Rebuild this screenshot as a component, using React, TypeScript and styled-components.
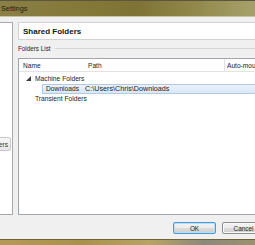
import React from "react";
import styled, { createGlobalStyle } from "styled-components";

const GlobalStyle = createGlobalStyle`
  html, body {
    margin: 0;
    padding: 0;
    width: 255px;
    height: 245px;
    overflow: hidden;
    background: #f0f0f0;
  }
  * { box-sizing: border-box; }
`;

const Window = styled.div`
  width: 272px;
  height: 245px;
  display: flex;
  flex-direction: column;
  font-family: "Liberation Sans", Arial, sans-serif;
  color: #1b1b1b;
`;

const TitleBar = styled.div`
  height: 17px;
  flex-shrink: 0;
  display: flex;
  align-items: center;
  padding-left: 1px;
  border-top: 1px solid #5b5640;
  border-bottom: 1px solid #c9c4a0;
  background: linear-gradient(
    90deg,
    #8a7f45 0%,
    #857a3a 25%,
    #7e7334 50%,
    #8f8648 70%,
    #a39d66 90%,
    #a8a36e 100%
  );
  font-size: 7.3px;
  color: #1c1a10;
`;

const Body = styled.div`
  flex: 1;
  display: flex;
  flex-direction: column;
  padding-top: 5px;
  background: #f0f0f0;
`;

const Main = styled.div`
  height: 193px;
  display: flex;
  gap: 5px;
`;

const NavPanel = styled.div`
  width: 13px;
  flex-shrink: 0;
  background: #fff;
  border: 1px solid #a9a9a9;
  border-left: none;
  display: flex;
  flex-direction: column;
  justify-content: flex-start;
  align-items: flex-end;
  overflow: hidden;
  padding-top: 114px;
  padding-right: 1px;
`;

const NavItem = styled.div<{ $active?: boolean }>`
  flex-shrink: 0;
  height: 14px;
  display: flex;
  align-items: center;
  padding: 0 2px 0 6px;
  white-space: nowrap;
  font-size: 6.6px;
  color: #333;
  border: 1px solid ${(p) => (p.$active ? "#c9c9c9" : "transparent")};
  border-radius: 2px;
  background: ${(p) =>
    p.$active ? "linear-gradient(#f6f6f6, #e6e6e6)" : "transparent"};
`;

const Content = styled.div`
  flex: 1;
  min-width: 0;
  display: flex;
  flex-direction: column;
`;

const PageHeader = styled.div`
  height: 18px;
  flex-shrink: 0;
  background: #fff;
  border: 1px solid #d2d2d2;
  display: flex;
  align-items: center;
  padding-left: 4px;
  font-size: 8px;
  font-weight: bold;
  color: #151515;
`;

const GroupTitle = styled.div`
  height: 18px;
  flex-shrink: 0;
  display: flex;
  align-items: center;
  gap: 4px;
  font-size: 6.3px;
  color: #222;
  padding-bottom: 1px;

  &::after {
    content: "";
    flex: 1;
    height: 1px;
    background: #d5d5d5;
  }
`;

const ListBox = styled.div`
  flex: 1;
  background: #fff;
  border: 1px solid #a0a4ab;
  display: flex;
  flex-direction: column;
`;

const HeaderRow = styled.div`
  height: 13px;
  flex-shrink: 0;
  display: grid;
  grid-template-columns: 65px 140px 1fr;
  border-bottom: 1px solid #e3e3e3;
  font-size: 6.6px;
`;

const HeaderCell = styled.div<{ $sep?: boolean }>`
  display: flex;
  align-items: center;
  padding-left: ${(p) => (p.$sep ? "2px" : "3px")};
  border-left: 1px solid ${(p) => (p.$sep ? "#e3e3e3" : "transparent")};
  white-space: nowrap;
  overflow: hidden;
`;

const Tree = styled.div`
  display: flex;
  flex-direction: column;
  padding-top: 2px;
`;

const TreeRow = styled.div<{ $indent: number; $selected?: boolean }>`
  height: ${(p) => (p.$selected ? "10px" : "9.5px")};
  display: flex;
  align-items: center;
  margin-left: ${(p) => p.$indent}px;
  padding-left: ${(p) => (p.$selected ? "3px" : "0")};
  font-size: 6.7px;
  white-space: nowrap;
  border: 1px solid ${(p) => (p.$selected ? "#b3c9e6" : "transparent")};
  border-right: none;
  background: ${(p) =>
    p.$selected ? "linear-gradient(#eaf2fc, #d9e7f8)" : "transparent"};
`;

const Expander = styled.span`
  width: 9px;
  display: flex;
  align-items: center;
  justify-content: flex-start;
`;

const PathCell = styled.span`
  margin-left: 6px;
  font-size: 7.2px;
`;

const Footer = styled.div`
  height: 24px;
  display: flex;
  justify-content: flex-end;
  align-items: flex-start;
  gap: 6px;
  padding: 7px 7px 0 0;
`;

const DialogButton = styled.button<{ $default?: boolean }>`
  width: 43px;
  height: 12px;
  padding: 0;
  font-family: "Liberation Sans", Arial, sans-serif;
  font-size: 6.4px;
  color: #222;
  border-radius: 2px;
  border: 1px solid ${(p) => (p.$default ? "#4a9ad6" : "#8e8f8f")};
  box-shadow: ${(p) =>
    p.$default ? "inset 0 0 0 1px #b6def5" : "inset 0 0 0 1px #f8f8f8"};
  background: linear-gradient(#f4f4f4 0%, #ebebeb 50%, #dddddd 51%, #cfcfcf 100%);
`;

const BottomFrame = styled.div`
  height: 6px;
  flex-shrink: 0;
  border-top: 1px solid #6f6436;
  background: linear-gradient(
    90deg,
    #b59a55 0%,
    #a8924a 30%,
    #b8a463 55%,
    #8b8a7a 75%,
    #a0946a 100%
  );
`;

export default function App() {
  return (
    <>
      <GlobalStyle />
      <Window>
        <TitleBar>Settings</TitleBar>
        <Body>
          <Main>
            <NavPanel>
              <NavItem $active>Shared Folders</NavItem>
            </NavPanel>
            <Content>
              <PageHeader>Shared Folders</PageHeader>
              <GroupTitle>Folders List</GroupTitle>
              <ListBox>
                <HeaderRow>
                  <HeaderCell>Name</HeaderCell>
                  <HeaderCell>Path</HeaderCell>
                  <HeaderCell $sep>Auto-mount</HeaderCell>
                </HeaderRow>
                <Tree>
                  <TreeRow $indent={6}>
                    <Expander>
                      <svg width="5" height="5" viewBox="0 0 5 5">
                        <polygon points="5,0 5,5 0,5" fill="#3c3c3c" />
                      </svg>
                    </Expander>
                    Machine Folders
                  </TreeRow>
                  <TreeRow $indent={23} $selected>
                    Downloads
                    <PathCell>C:\Users\Chris\Downloads</PathCell>
                  </TreeRow>
                  <TreeRow $indent={15}>Transient Folders</TreeRow>
                </Tree>
              </ListBox>
            </Content>
          </Main>
          <Footer>
            <DialogButton $default>OK</DialogButton>
            <DialogButton>Cancel</DialogButton>
          </Footer>
        </Body>
        <BottomFrame />
      </Window>
    </>
  );
}
